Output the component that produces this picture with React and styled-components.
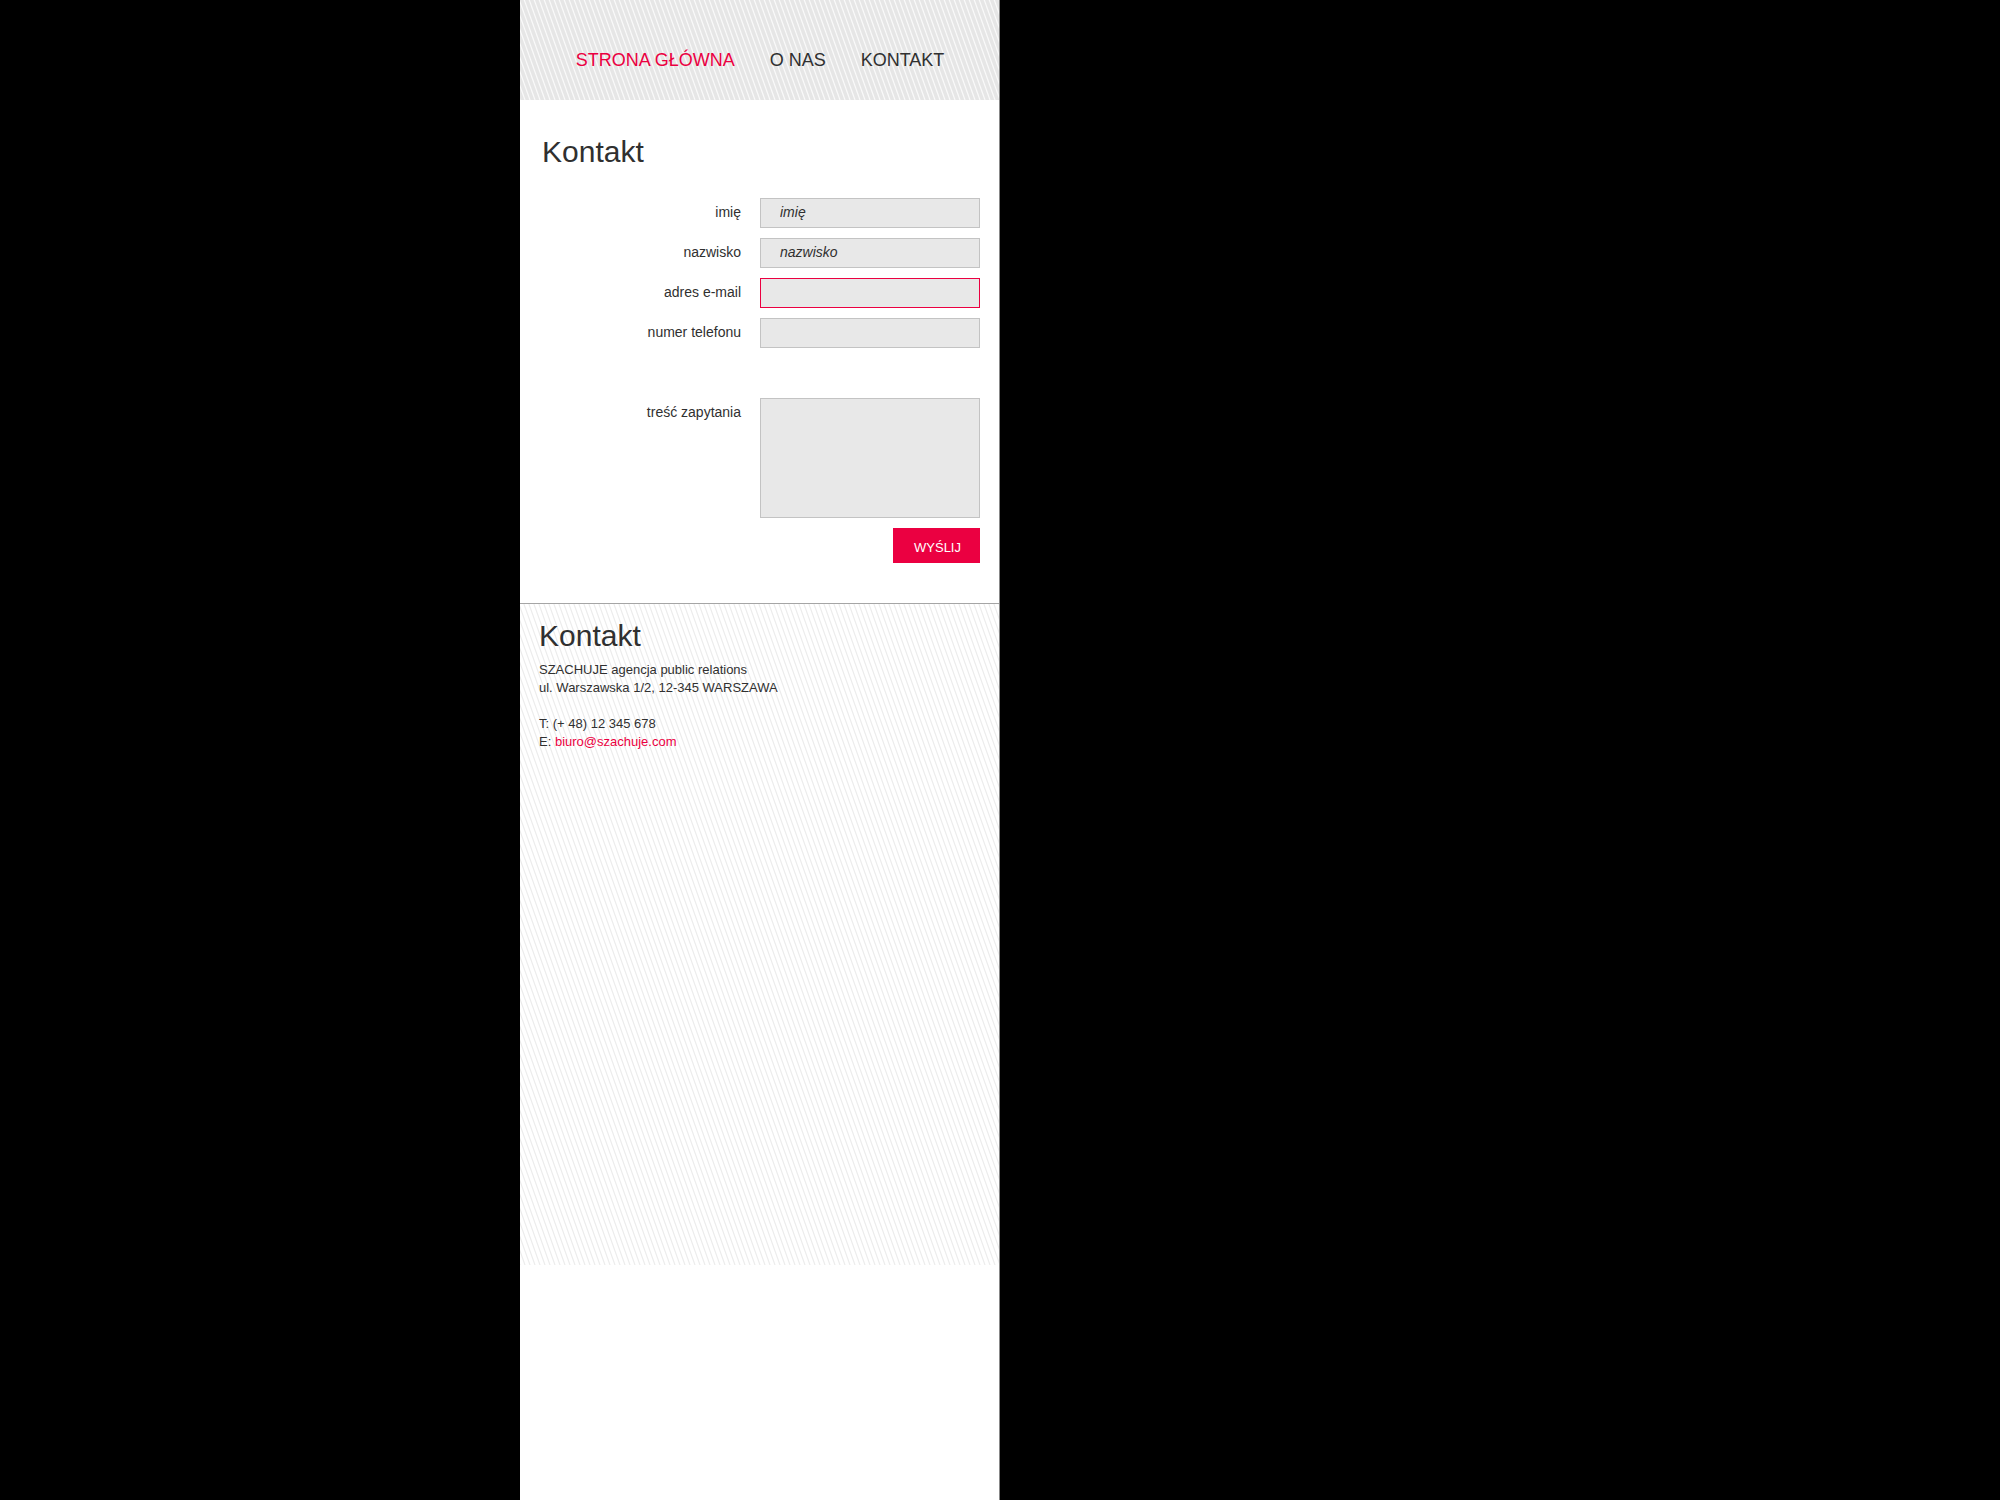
import React from "react";
import styled, { createGlobalStyle } from "styled-components";

const accent = "#eb0041";
const ink = "#303030";
const fontStack = '"Liberation Sans", Arial, sans-serif';

// Slanted hairlines, drawn as a small seamless tile.
const stripes = (color) => {
  const svg = `<svg xmlns="http://www.w3.org/2000/svg" width="5" height="14"><path d="M-5 -14L10 28M-5 0L5 28M0 -14L10 14" stroke="${color}" stroke-width="1.2" fill="none"/></svg>`;
  return `url("data:image/svg+xml,${encodeURIComponent(svg)}")`;
};

const Global = createGlobalStyle`
  * { box-sizing: border-box; }
  body { margin: 0; background: #000; color: ${ink}; font-family: ${fontStack}; }
  h1, h2, p { margin: 0; font-weight: 400; }
`;

const Container = styled.div`
  width: 100%;
  max-width: 960px;
  margin: 0 auto;
`;

const Column = styled.div`
  width: 50%;
  min-width: 320px;
  min-height: 100vh;
  background: #fff;
  border-right: 1px solid #888;
`;

const Header = styled.header`
  height: 100px;
  padding-top: 48px;
  background: #e6e6e6 ${stripes("#fafafa")} left bottom;
`;

const Nav = styled.nav`
  display: flex;
  justify-content: center;
  gap: 35px;
  padding-left: 1px;
`;

const NavLink = styled.a`
  color: ${(p) => (p.$active ? accent : ink)};
  font-size: 18px;
  line-height: 24px;
  text-decoration: none;
`;

const Main = styled.main`
  padding: 32px 19px 40px 22px;
`;

const Title = styled.h1`
  font-size: 30px;
  line-height: 40px;
`;

const Form = styled.form`
  display: flex;
  flex-direction: column;
  gap: 10px;
  padding-top: 26px;
`;

const Row = styled.div`
  display: flex;
  justify-content: flex-end;
  gap: 19px;
  margin-top: ${(p) => (p.$spaced ? "40px" : "0")};
`;

const Label = styled.label`
  font-size: 14px;
  line-height: 28px;
`;

const Input = styled.input`
  width: 220px;
  height: 30px;
  padding: 0 19px 2px;
  border: 1px solid ${(p) => (p.$invalid ? accent : "#c3c3c3")};
  border-radius: 0;
  outline: none;
  background: #e8e8e8;
  color: ${ink};
  font: italic 14px ${fontStack};
  &::placeholder { color: ${ink}; opacity: 1; }
`;

const Message = styled(Input)`
  height: 120px;
  padding: 8px 19px;
  resize: none;
`;

const Submit = styled.button`
  align-self: flex-end;
  height: 35px;
  padding: 4px 19px 0 21px;
  border: 0;
  background: ${accent};
  color: #fff;
  font: 13px ${fontStack};
`;

const Footer = styled.footer`
  min-height: 662px;
  padding: 12px 19px;
  border-top: 1px solid #a5a5a5;
  background: #fff ${stripes("#ececec")} left bottom;
`;

const FooterTitle = styled(Title).attrs({ as: "h2" })``;

const Details = styled.p`
  padding-top: ${(p) => (p.$first ? "5px" : "18px")};
  font-size: 13px;
  line-height: 18px;
`;

const MailLink = styled.a`
  color: ${accent};
  text-decoration: none;
`;

const fields = [
  { id: "imie", label: "imię", placeholder: "imię", type: "text" },
  { id: "nazwisko", label: "nazwisko", placeholder: "nazwisko", type: "text" },
  { id: "email", label: "adres e-mail", type: "email", invalid: true },
  { id: "telefon", label: "numer telefonu", type: "tel" },
];

export default function App() {
  return (
    <Container>
      <Global />
      <Column>
        <Header>
          <Nav>
            <NavLink href="#home" $active>STRONA GŁÓWNA</NavLink>
            <NavLink href="#about">O NAS</NavLink>
            <NavLink href="#contact">KONTAKT</NavLink>
          </Nav>
        </Header>
        <Main>
          <Title>Kontakt</Title>
          <Form>
            {fields.map((f) => (
              <Row key={f.id}>
                <Label htmlFor={f.id}>{f.label}</Label>
                <Input id={f.id} type={f.type} placeholder={f.placeholder} $invalid={f.invalid} />
              </Row>
            ))}
            <Row $spaced>
              <Label htmlFor="tresc">treść zapytania</Label>
              <Message as="textarea" id="tresc" />
            </Row>
            <Submit type="submit">WYŚLIJ</Submit>
          </Form>
        </Main>
        <Footer>
          <FooterTitle>Kontakt</FooterTitle>
          <Details $first>
            SZACHUJE agencja public relations<br />
            ul. Warszawska 1/2, 12-345 WARSZAWA
          </Details>
          <Details>
            T: (+ 48) 12 345 678<br />
            E: <MailLink href="mailto:biuro@szachuje.com">biuro@szachuje.com</MailLink>
          </Details>
        </Footer>
      </Column>
    </Container>
  );
}
